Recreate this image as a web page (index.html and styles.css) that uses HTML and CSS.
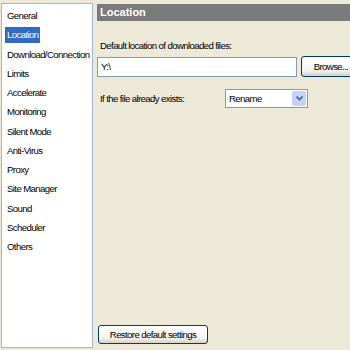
FILE: index.html
```html
<!DOCTYPE html>
<html lang="en">
<head>
  <meta charset="UTF-8">
  <title>Options - Location</title>
  <link rel="stylesheet" href="styles.css">
</head>
<body>
  <ul class="nav">
    <li>General</li>
    <li><span class="sel">Location</span></li>
    <li>Download/Connection</li>
    <li>Limits</li>
    <li>Accelerate</li>
    <li>Monitoring</li>
    <li>Silent Mode</li>
    <li>Anti-Virus</li>
    <li>Proxy</li>
    <li>Site Manager</li>
    <li>Sound</li>
    <li>Scheduler</li>
    <li>Others</li>
  </ul>

  <section class="page">
    <h1 class="title">Location</h1>

    <label class="lbl" for="path">Default location of downloaded files:</label>
    <div class="row">
      <input class="field" id="path" type="text" value="Y:\">
      <button class="btn browse">Browse...</button>
    </div>

    <div class="row exists">
      <label class="lbl-inline" for="exists">If the file already exists:</label>
      <div class="combo">
        <span class="combo-val">Rename</span>
        <span class="combo-btn">
          <svg width="7" height="5" viewBox="0 0 7 5"><path d="M0.5 0.5 L3.5 3.5 L6.5 0.5" fill="none" stroke="#4d6185" stroke-width="1.6"/></svg>
        </span>
      </div>
    </div>

    <div class="spacer"></div>
    <button class="btn restore">Restore default settings</button>
  </section>
</body>
</html>
```

FILE: styles.css
```css
body { margin: 0; height: 350px; overflow: hidden; background: #ece9d8; display: flex;
  font-family: "Liberation Sans", Arial, sans-serif; font-size: 9.6px; letter-spacing: -0.6px; color: #000; }

.nav { list-style: none; margin: 3px 0 2px 1px; padding: 3px 0 0 5px; width: 92px; flex: none; background: #fff;
  border: 1px solid #a5b7cc; box-sizing: border-box; height: 345px; }
.nav li { height: 19.25px; line-height: 17px; white-space: nowrap; }
.sel { display: inline-block; background: #316ac5; color: #fff; padding: 0 2px; line-height: 16px; margin-left: -2px; }

.page { flex: 1; display: flex; flex-direction: column; padding: 4px 0 6px 4px; overflow: hidden; }
.title { margin: 0; background: #7b7b7b; color: #fff; font-size: 11px; letter-spacing: 0;
  height: 17px; line-height: 17px; padding-left: 3px; font-weight: bold; }

.lbl { margin: 18px 0 0 3px; height: 14px; line-height: 14px; }
.row { display: flex; align-items: center; margin-top: 3px; }
.field { width: 200px; flex: none; height: 20px; box-sizing: border-box; border: 1px solid #7f9db9; padding: 0 3px;
  font: inherit; letter-spacing: inherit; margin: 0; }
.btn { font: inherit; letter-spacing: inherit; color: #000; border: 1px solid #003c74; border-radius: 3px;
  background: linear-gradient(#fff, #f4f4f0 70%, #d6d0c5); margin: 0; padding: 0; cursor: pointer; white-space: nowrap; }
.browse { margin-left: 4px; height: 21px; width: 60px; flex: none; }

.exists { margin-top: 12px; }
.lbl-inline { margin-left: 3px; width: 125px; }
.combo { display: flex; width: 83px; height: 19px; box-sizing: border-box; border: 1px solid #7f9db9; background: #fff; }
.combo-val { flex: 1; line-height: 17px; padding-left: 3px; }
.combo-btn { width: 14px; margin: 1px; background: #c1d3fb; border-radius: 2px; display: flex; align-items: center; justify-content: center; }

.spacer { flex: 1; }
.restore { width: 110px; height: 19px; margin-left: 1px; }
```
